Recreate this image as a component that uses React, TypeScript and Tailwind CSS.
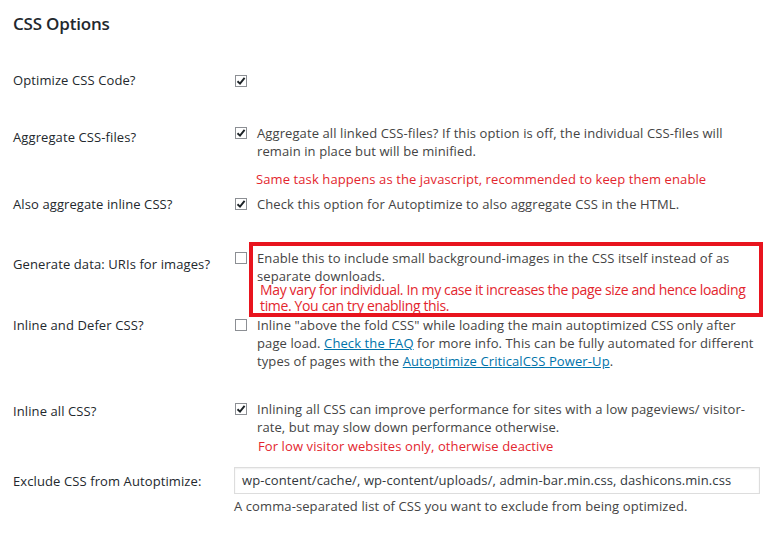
import React from "react";

const font = { fontFamily: '"Open Sans", "Noto Sans", sans-serif' };

function Box({ checked, className = "" }: { checked?: boolean; className?: string }) {
  return (
    <div
      className={`w-[12px] h-[12px] shrink-0 border border-[#8c8f94] bg-white flex items-center justify-center ${className}`}
    >
      {checked && (
        <svg width="10" height="10" viewBox="0 0 10 10">
          <path d="M1.5 5.2 L4 7.6 L8.6 1.8" fill="none" stroke="#1d2327" strokeWidth="1.9" />
        </svg>
      )}
    </div>
  );
}

function Label({ children, offset }: { children: React.ReactNode; offset: string }) {
  return <div className={`w-[221px] shrink-0 text-[#23282d] leading-[18px] ${offset}`}>{children}</div>;
}

export default function App() {
  return (
    <div
      className="w-[775px] h-[542px] bg-white px-[13px] pt-[13px] text-[13px] tracking-[0.1px] text-[#444]"
      style={font}
    >
      <div className="text-[17px] font-semibold leading-[22px] text-[#23282d] tracking-[-0.2px]">CSS Options</div>

      {/* R1 */}
      <div className="flex mt-[37px]">
        <Label offset="-mt-[1px]">Optimize CSS Code?</Label>
        <div className="leading-[18px] h-[18px] pt-[3px] pl-[1px]">
          <Box checked />
        </div>
      </div>

      {/* R2 */}
      <div className="flex mt-[34px]">
        <Label offset="mt-[4px]">Aggregate CSS-files?</Label>
        <div className="flex flex-col">
          <div className="flex gap-[10px] pl-[1px]">
            <Box checked className="mt-[3px]" />
            <div className="leading-[18px] whitespace-nowrap">
              Aggregate all linked CSS-files? If this option is off, the individual CSS-files will
              <br />
              remain in place but will be minified.
            </div>
          </div>
          <div className="mt-[10px] pl-[22px] leading-[18px] text-[#e3262e] whitespace-nowrap">
            Same task happens as the javascript, recommended to keep them enable
          </div>
        </div>
      </div>

      {/* R3 */}
      <div className="flex mt-[7px]">
        <Label offset="">Also aggregate inline CSS?</Label>
        <div className="flex gap-[10px] pl-[1px]">
          <Box checked className="mt-[3px]" />
          <div className="leading-[18px] whitespace-nowrap">
            Check this option for Autoptimize to also aggregate CSS in the HTML.
          </div>
        </div>
      </div>

      {/* R4 */}
      <div className="flex mt-[36px]">
        <Label offset="mt-[6px]">Generate data: URIs for images?</Label>
        <div className="relative flex gap-[10px] pl-[1px]">
          <Box className="mt-[3px]" />
          <div className="flex flex-col">
            <div className="leading-[18px] whitespace-nowrap">
              Enable this to include small background-images in the CSS itself instead of as
              <br />
              separate downloads.
            </div>
            <div className="-mt-[3px] pl-[3px] text-[14px] leading-[16px] text-[#e3262e] tracking-[-0.35px] whitespace-nowrap">
              May vary for individual. In my case it increases the page size and hence loading
              <br />
              time. You can try enabling this.
            </div>
          </div>
          <div className="absolute left-[15px] top-[-7px] w-[514px] h-[75px] border-[4px] border-[#e8141e]" />
        </div>
      </div>

      {/* R5 */}
      <div className="flex mt-[2px]">
        <Label offset="">Inline and Defer CSS?</Label>
        <div className="flex gap-[10px] pl-[1px]">
          <Box className="mt-[3px]" />
          <div className="leading-[18px] whitespace-nowrap">
            Inline "above the fold CSS" while loading the main autoptimized CSS only after
            <br />
            page load. <span className="text-[#0073aa] underline">Check the FAQ</span> for more info. This can be
            fully automated for different
            <br />
            types of pages with the{" "}
            <span className="text-[#0073aa] underline">Autoptimize CriticalCSS Power-Up</span>.
          </div>
        </div>
      </div>

      {/* R6 */}
      <div className="flex mt-[30px]">
        <Label offset="mt-[2px]">Inline all CSS?</Label>
        <div className="flex flex-col">
          <div className="flex gap-[10px] pl-[1px]">
            <Box checked className="mt-[3px]" />
            <div className="leading-[18px] whitespace-nowrap">
              Inlining all CSS can improve performance for sites with a low pageviews/ visitor-
              <br />
              rate, but may slow down performance otherwise.
            </div>
          </div>
          <div className="mt-[1px] pl-[24px] leading-[18px] text-[#e3262e] whitespace-nowrap">
            For low visitor websites only, otherwise deactive
          </div>
        </div>
      </div>

      {/* R7 */}
      <div className="flex mt-[12px]">
        <Label offset="mt-[5px]">Exclude CSS from Autoptimize:</Label>
        <div className="flex flex-col">
          <div className="w-[526px] h-[27px] border border-[#ddd] shadow-[inset_0_1px_2px_rgba(0,0,0,0.07)] pl-[7px] flex items-center text-[#32373c] whitespace-nowrap">
            wp-content/cache/, wp-content/uploads/, admin-bar.min.css, dashicons.min.css
          </div>
          <div className="mt-[3px] leading-[18px] whitespace-nowrap">
            A comma-separated list of CSS you want to exclude from being optimized.
          </div>
        </div>
      </div>
    </div>
  );
}
